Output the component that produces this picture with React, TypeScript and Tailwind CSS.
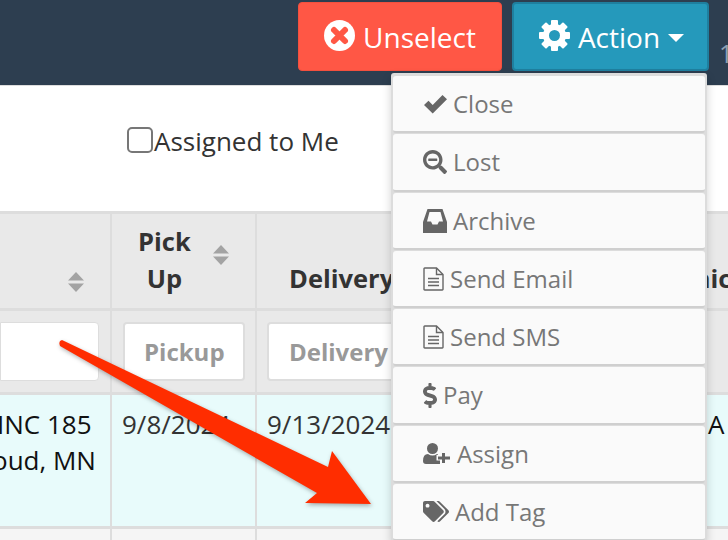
import type { ReactNode } from "react";
import { FaDollarSign, FaSearchMinus, FaTags } from "react-icons/fa";

function FileIcon() {
  return (
    <svg width="21" height="24" viewBox="0 0 21 24" fill="none" stroke="currentColor" strokeWidth="1.4">
      <path d="M1.7 1H13.5L20 7.5V22.3a.7.7 0 0 1-.7.7H1.7a.7.7 0 0 1-.7-.7V1.7a.7.7 0 0 1 .7-.7Z" />
      <path d="M13.5 1V7.5H20M5 11.5H16M5 15H16M5 18.5H16" />
    </svg>
  );
}

const menuItems: { label: string; icon: ReactNode }[] = [
  {
    label: "Close",
    icon: (
      <svg width="23" height="20" viewBox="0 0 23 20" fill="currentColor" className="ml-px">
        <path d="M0 11 4.5 6.8 8.7 11 18.5 1 23 5.3 8.7 19.5Z" />
      </svg>
    ),
  },
  { label: "Lost", icon: <FaSearchMinus className="h-[24px] w-[24px]" /> },
  {
    label: "Archive",
    icon: (
      <svg width="24" height="24" viewBox="0 0 24 24" fill="currentColor" fillRule="evenodd">
        <path d="M4.5 0H19.5L24 13V24H0V13ZM6.5 3 4 12.5H8L9.5 15.5H14.5L16 12.5H20L17.5 3Z" />
      </svg>
    ),
  },
  { label: "Send Email", icon: <FileIcon /> },
  { label: "Send SMS", icon: <FileIcon /> },
  { label: "Pay", icon: <FaDollarSign className="h-[25px] w-[14px]" /> },
  {
    label: "Assign",
    icon: (
      <svg width="28" height="21" viewBox="0 0 28 21" fill="currentColor">
        <circle cx="9.5" cy="5.5" r="5.5" />
        <path d="M0 18Q0 11 5 11 9.5 14 14 11L15 11.5V12H13.5V17.5H17V21H3Q0 21 0 18Z" />
        <path d="M19 10H22V13.5H27V16.5H22V20H19V16.5H15V13.5H19Z" />
      </svg>
    ),
  },
  { label: "Add Tag", icon: <FaTags className="h-[21px] w-[26px]" /> },
];

function SortIcon() {
  return (
    <svg width="16" height="20" viewBox="0 0 16 20" className="fill-[#a3a3a3]">
      <path d="M8 0 16 8.5H0Z" />
      <path d="M0 11.5H16L8 20Z" />
    </svg>
  );
}

function GearIcon() {
  return (
    <svg width="31" height="31" viewBox="-15.5 -15.5 31 31" className="mb-[3px]">
      {[0, 45, 90, 135].map((angle) => (
        <rect key={angle} x="-3.5" y="-15.5" width="7" height="31" rx="1" fill="#ffffff" transform={`rotate(${angle})`} />
      ))}
      <circle r="11.5" fill="#ffffff" />
      <circle r="5.5" fill="#2599bb" />
    </svg>
  );
}

export default function App() {
  return (
    <div className="relative h-[540px] w-[728px] overflow-hidden bg-white font-['Open_Sans',sans-serif]">
      <header className="flex h-[86px] items-start border-b border-[#dddddd] bg-[#2d3e50] pt-[2px] pl-[298px]">
        <button className="flex h-[69px] w-[204px] shrink-0 items-center justify-center gap-[8px] rounded-[4px] border border-[#f4503e] bg-[#ff5745] text-[28px] text-white">
          <svg width="31" height="31" viewBox="0 0 31 31" className="mb-[3px]">
            <circle cx="15.5" cy="15.5" r="15.5" fill="#ffffff" />
            <path d="M10 10 21 21M21 10 10 21" stroke="#ff5745" strokeWidth="6" strokeLinecap="round" />
          </svg>
          Unselect
        </button>
        <button className="ml-[10px] flex h-[69px] w-[197px] shrink-0 items-center justify-center gap-[8px] rounded-[4px] border-2 border-[#1f7f9f] bg-[#2599bb] pl-[2px] text-[28px] text-white">
          <GearIcon />
          Action
          <span className="mt-[3px] h-0 w-0 border-x-[8px] border-t-[8px] border-x-transparent border-t-white" />
        </button>
        <span className="ml-[10px] mt-[39px] text-[25px] leading-[25px] text-[#8fa1b5]">1</span>
      </header>

      <div className="flex h-[125px] items-center pl-[127px] pb-[14px]">
        <input type="checkbox" readOnly className="mb-[3px] h-[26px] w-[26px] appearance-none rounded-[5px] border-2 border-[#777777] bg-white" />
        <span className="ml-px text-[26px] text-[#333333]">Assigned to Me</span>
      </div>

      <div className="flex h-[100px] border-y-[3px] border-[#dddddd] bg-[#e9e9e9] text-[25.5px] font-bold leading-[37px] text-[#333333]">
        <div className="flex w-[112px] shrink-0 items-end justify-end border-r-2 border-[#dddddd] pr-[26px] pb-[16px]">
          <SortIcon />
        </div>
        <div className="flex w-[145px] shrink-0 items-center border-r-2 border-[#dddddd] pl-[26px]">
          <span className="mb-[2px] text-center">Pick<br />Up</span>
          <span className="mb-[12px] ml-[22px]"><SortIcon /></span>
        </div>
        <div className="flex w-[145px] shrink-0 items-end border-r-2 border-[#dddddd] pb-[11px] pl-[32px]">Delivery</div>
        <div className="w-[200px] shrink-0" />
        <div className="flex shrink-0 items-end whitespace-nowrap pb-[11px] pl-[32px]">Technician</div>
      </div>

      <div className="flex h-[84px] border-b-[3px] border-[#dddddd] bg-[#e9e9e9]">
        <div className="flex w-[112px] shrink-0 items-center border-r-2 border-[#dddddd] pr-[11px]">
          <input readOnly className="h-[59px] w-full rounded-r-[4px] border border-[#dddddd] bg-white" />
        </div>
        <div className="flex w-[145px] shrink-0 items-center border-r-2 border-[#dddddd] pl-[11px]">
          <input readOnly placeholder="Pickup" className="h-[59px] w-[122px] rounded-[4px] border-2 border-[#dddddd] bg-white pl-[19px] text-[24px] font-bold outline-none placeholder:text-[#999999]" />
        </div>
        <div className="flex w-[145px] shrink-0 items-center justify-end border-r-2 border-[#dddddd]">
          <input readOnly placeholder="Delivery" className="h-[59px] w-[133px] rounded-l-[4px] border-2 border-[#dddddd] bg-white pl-[20px] text-[24px] font-bold outline-none placeholder:text-[#999999]" />
        </div>
      </div>

      <div className="flex h-[134px] border-b-[3px] border-[#dddddd] bg-[#e8fbfb] text-[26px] leading-[37px]">
        <div className="w-[112px] shrink-0 overflow-hidden border-r-2 border-[#dddddd] pt-[11px] whitespace-nowrap text-[#111111]">
          <div className="-ml-[3px]">INC 185</div>
          <div className="-ml-[8px] -mt-px">oud, MN</div>
        </div>
        <div className="w-[145px] shrink-0 overflow-hidden border-r-2 border-[#dddddd] pt-[11px] pl-[10px] text-[#333333]">9/8/2024</div>
        <div className="w-[145px] shrink-0 border-r-2 border-[#dddddd] pt-[11px] pl-[10px] text-[#333333]">9/13/2024</div>
        <div className="w-[306px] shrink-0" />
        <div className="pt-[11px] text-[#111111]">A</div>
      </div>

      <div className="flex h-[20px] bg-[#f5f5f5]">
        <div className="w-[112px] border-r-2 border-[#dddddd]" />
        <div className="w-[145px] border-r-2 border-[#dddddd]" />
      </div>

      <svg width="728" height="540" viewBox="0 0 728 540" className="absolute inset-0 drop-shadow-[1px_2px_2px_rgba(0,0,0,0.3)]">
        <path d="M62 340 328 467 332 451 371 504 305 503 317 493 60 346Q58 341 62 340Z" fill="#ff2d00" />
      </svg>

      <div className="absolute left-[391px] top-[73px] w-[316px] rounded-[3px] bg-[#dcdcdc] px-[2px] pt-[3px] shadow-[0_4px_10px_rgba(0,0,0,0.18)]">
        {menuItems.map((item) => (
          <div
            key={item.label}
            className="mb-px flex h-[57.25px] items-center gap-[6px] rounded-[3px] border-b-2 border-[#cfcfcf] bg-[#fafafa] pt-px pl-[30px] text-[24px] text-[#777777]"
          >
            <span className="text-[#666666]">{item.icon}</span>
            {item.label}
          </div>
        ))}
      </div>
    </div>
  );
}
